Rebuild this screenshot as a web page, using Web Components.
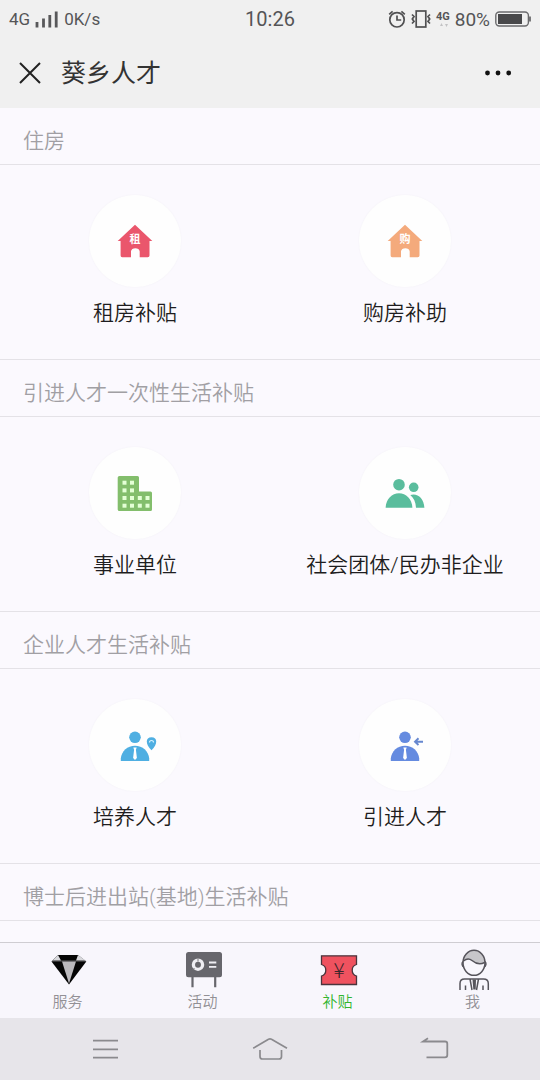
<!DOCTYPE html>
<html lang="zh-CN">
<head>
<meta charset="utf-8">
<meta name="viewport" content="width=device-width, initial-scale=1">
<title>葵乡人才</title>
<style>
body { margin: 0; font-family: Roboto, "Noto Sans CJK SC", sans-serif; }
</style>
</head>
<body>
<talent-app></talent-app>
<script>
const person = `<circle cx="20" cy="12.3" r="5.8"/><path d="M5.8 36V33.5C6.5 26 12.5 20.7 20 20.7S33.500 26 34.200 33.500V36Z"/>
  <path d="M18.300 22.500H21.700L20.900 24.800L21.900 33L20 35L18.100 33L19.100 24.800Z" fill="#fff"/>`;
const house = c => `<path d="M20 3.800L37.300 20H34.500V34.500Q34.500 36.200 32.800 36.200H24.700V30.500C24.700 26 16 26 16 30.500V36.200H7.200Q5.600 36.200 5.600 34.500V20H2.700Z"/>
  <text x="20" y="22" text-anchor="middle" font-size="11" font-weight="700" fill="#fff">${c}</text>`;
const windows = [[7.5,7.7],[15,7.7],[7.5,15.4],[15,15.4],[7.5,23],[15,23],[22.8,23],[30.500,23],[7.5,30.700],[15,30.700],[22.800,30.700],[30.500,30.700]]
  .map(([x, y]) => `<rect x="${x}" y="${y}" width="4" height="4" fill="#e4ffd6"/>`).join('');

/* Every drawing: [width, height, markup] */
const ICONS = {
  rent: [40, 40, `<g fill="#ea566c">${house('租')}</g>`],
  buy: [40, 40, `<g fill="#f4aa7c">${house('购')}</g>`],
  building: [40, 40, `<path d="M4.500 3H22.500Q24 3 24 4.500V18.500H35.500Q37 18.500 37 20V36.500Q37 38 35.500 38H4.500Q2.700 38 2.700 36.500V4.500Q2.700 3 4.500 3Z" fill="#83be6c"/>${windows}`],
  people: [40, 40, `<g fill="#5abd9d"><circle cx="14" cy="11.700" r="5.800"/><path d="M.6 34.700C1 26 7 20.300 14 20.300S27 26 27.400 34.700Z"/><circle cx="28.700" cy="14.300" r="4.800"/><path d="M25.300 22C32 19.500 39 25 39.400 34.700H31C30.700 29 28.800 25 25.300 22Z"/></g>`],
  train: [40, 40, `<g fill="#4fafe2">${person}<path d="M36.500 12.200C42.800 12.200 42.800 19 36.500 25.300C30.200 19 30.200 12.200 36.500 12.200Z"/><path d="M34.500 17.500a2 2 0 0 1 4 0" fill="none" stroke="#d8f4ff" stroke-width="1.200"/></g>`],
  recruit: [40, 40, `<g fill="#658be0">${person}</g><path d="M38 16.700H30.200M33.500 13.300L30 16.700L33.500 20" fill="none" stroke="#6687cf" stroke-width="1.900"/>`],
  diamond: [40, 40, `<path d="M10 5H30L38.300 11.500L21 34.500L3.500 11.500Z" fill="#050505"/><path d="M10 5L13 10.500H4.500ZM30 5L28 10.500H37.500Z" fill="#d8d8dc"/><path d="M14 11.500H28L21 33.500Z" fill="#bbb9bd"/><path d="M4 11H38" stroke="#a5a4a8" stroke-width=".6"/>`],
  board: [40, 40, `<rect x="3" y="2" width="36" height="25.300" rx="2.500" fill="#67666c"/><path d="M9.500 27V37.300M32.200 27V37.300" stroke="#67666c" stroke-width="2.200"/><circle cx="15" cy="14.700" r="4.600" fill="none" stroke="#efeef3" stroke-width="3.300"/><path d="M15 11.500V8.500M11.500 18L9.500 20" stroke="#77767b" stroke-width="1"/><path d="M26 12.500H33.300M26 16.800H33.300" stroke="#efeef3" stroke-width="1.800"/>`],
  coupon: [40, 40, `<path d="M3.500 5.800H38.500V14.500A6 6 0 0 0 38.500 26V34.500H3.500V26A6 6 0 0 0 3.500 14.500Z" fill="#ef525f" stroke="#4a343c" stroke-width="1.300"/><text x="21" y="28" text-anchor="middle" font-family="Noto Sans CJK SC" font-size="21" font-weight="300" fill="#3b252b">¥</text>`],
  me: [40, 40, `<path d="M10.500 9.500C11.500 3 16 .8 21 .8S30.800 4 31.600 12.500C27 15 22.500 13.500 19 10.500C16 8.500 13.500 8.500 10.500 11Z" fill="#c7c6ca"/><g fill="none" stroke="#56545b" stroke-width="1.500"><ellipse cx="21" cy="12.800" rx="11" ry="12.500"/><path d="M10.500 11C14 8 16.500 8.500 19 10.500C22.500 13.500 27 15 31.600 12.500M10 11.500C8.300 13 9 16.500 11 17M32 11.500C33.700 13 33 16.500 31 17M7 40V33.500Q7 29 11.500 29H30.500Q35.300 29 35.300 33.500V40M12.500 35.500V40M30 35.500V40M17 29L19 40M25.500 29L23.500 40"/></g><path d="M19.500 29.500H23L22.700 39.500H20.300Z" fill="#56545b"/>`],
  menu: [36, 28, `<path d="M6 5.700H31M6 14.300H31M6 22.700H31" fill="none" stroke="#8b8a8e" stroke-width="1.700"/>`],
  home: [36, 28, `<path d="M1.200 13.300L16.500 4.200Q18 3.500 19.500 4.200L35 13.300M8 15V21.500Q8 24 10.500 24H27Q29.500 24 29.500 21.500V15" fill="none" stroke="#8b8a8e" stroke-width="1.700"/>`],
  back: [36, 28, `<path d="M11 3.300L6 6.500H28Q30.300 6.500 30.300 8.800V20Q30.300 22.300 28 22.300H9.500" fill="none" stroke="#8b8a8e" stroke-width="1.800"/>`],
  close: [22, 22, `<path d="M1 1L21 21M21 1L1 21" stroke="#222" stroke-width="2"/>`],
  more: [28, 8, `<g fill="#111"><circle cx="3.500" cy="4" r="2.400"/><circle cx="14" cy="4" r="2.400"/><circle cx="24.700" cy="4" r="2.400"/></g>`],
  signal: [24, 18, `<path d="M2 12V17.500M8.500 8.500V17.500M14.800 5V17.500M21.200 1.500V17.500" stroke="#58585a" stroke-width="2.800"/>`],
  alarm: [18, 18, `<g fill="none" stroke="#505052" stroke-width="1.700"><circle cx="9" cy="9.800" r="7.200"/><path d="M9 5.500V10H13.200M1.200 4.300L4.600 1.300M16.800 4.300L13.400 1.300"/></g>`],
  vibrate: [20, 18, `<g fill="none" stroke="#505052" stroke-width="1.700"><rect x="5.200" y="1" width="9.600" height="16"/><path d="M1 4.500L3 6.500L1.300 9L3 11.500L1 13.500M19 4.500L17 6.500L18.700 9L17 11.500L19 13.500"/></g>`],
  battery: [36, 16, `<rect x=".8" y="1" width="32.600" height="14" rx="3.500" fill="none" stroke="#6a6a6c" stroke-width="1.400"/><rect x="3" y="3" width="24" height="10" fill="#48484a"/><path d="M35 5.500V10.500" stroke="#6a6a6c" stroke-width="1.800"/>`],
  data: [10, 4, `<path d="M1 3L2.500 0L4 3ZM6 1L7.500 4L9 1Z" fill="#c2c2c4"/>`]
};

const define = (name, markup, setup) => customElements.define(name, class extends HTMLElement {
  constructor() {
    super();
    this.attachShadow({ mode: 'open' }).innerHTML = markup;
  }
  connectedCallback() { if (setup) setup(this, this.shadowRoot); }
});

define('ui-icon', `<style>:host{display:block;flex:none}svg{display:block;overflow:visible}</style>`, (el, root) => {
  const [w, h, art] = ICONS[el.getAttribute('name')];
  root.innerHTML += `<svg width="${w}" height="${h}" viewBox="0 0 ${w} ${h}" aria-hidden="true">${art}</svg>`;
});

define('status-bar', `<style>
  :host{display:grid;grid-template-columns:1fr auto 1fr;align-items:center;height:38px;padding:0 9px;background:#f0f0f0;color:#555557;font-size:17px}
  div{display:flex;align-items:center;gap:5px}
  .end{justify-content:flex-end}
  .time{font-size:20px}
  .net{display:block;font-size:11px;line-height:12px;font-weight:700}
  .net ui-icon{margin-left:3px}
  .level{font-size:19px}
</style>
<div><span>4G</span><ui-icon name="signal"></ui-icon><span>0K/s</span></div>
<span class="time">10:26</span>
<div class="end"><ui-icon name="alarm"></ui-icon><ui-icon name="vibrate"></ui-icon>
<span class="net">4G<ui-icon name="data"></ui-icon></span><span class="level">80%</span><ui-icon name="battery"></ui-icon></div>`);

define('title-bar', `<style>
  :host{display:flex;align-items:center;gap:20px;height:70px;padding:0 28px 0 19px;background:#f0f0f0;color:#333}
  button{border:0;padding:0;background:none;display:block}
  h1{flex:1;margin:0;padding-top:2px;font-size:25px;line-height:36px;font-weight:400}
</style>
<button aria-label="关闭"><ui-icon name="close"></ui-icon></button>
<h1><slot></slot></h1>
<button aria-label="更多"><ui-icon name="more"></ui-icon></button>`);

define('subsidy-section', `<style>
  :host{display:block}
  h2{margin:0;box-sizing:border-box;height:57px;padding:17px 23px 0;border-bottom:1px solid #e4e2e7;font-size:21px;line-height:32px;font-weight:350;color:#a19fa4;white-space:nowrap}
  div{display:grid;grid-template-columns:1fr 1fr;box-sizing:border-box;min-height:195px;padding:30px 0;border-bottom:1px solid #e4e2e7}
</style><h2></h2><div><slot></slot></div>`, (el, root) => {
  root.querySelector('h2').textContent = el.getAttribute('heading');
});

define('subsidy-tile', `<style>
  :host{display:block}
  a{display:flex;flex-direction:column;align-items:center;gap:11px;color:#1e1d20;text-decoration:none;font-size:21px;line-height:30px;font-weight:350;white-space:nowrap}
  .disc{display:grid;place-items:center;width:92px;height:92px;border-radius:50%;background:#fefefe;box-shadow:0 0 2px #f3f1f6}
</style><a href="#"><span class="disc"></span><span><slot></slot></span></a>`, (el, root) => {
  const icon = document.createElement('ui-icon');
  icon.setAttribute('name', el.getAttribute('icon'));
  root.querySelector('.disc').replaceChildren(icon);
});

define('tab-link', `<style>
  :host{display:block}
  a{display:flex;flex-direction:column;align-items:center;gap:1px;padding:7px 0 5px;color:#929095;text-decoration:none;font-size:15px;line-height:22px;font-weight:350}
  :host([active]) a{color:#31b52d}
</style><a href="#"><slot name="icon"></slot><span><slot></slot></span></a>`);

define('tab-bar', `<style>
  :host{display:grid;grid-template-columns:repeat(4,1fr);flex:none;border-top:1px solid #cfcdd2;background:#f8f6fc}
</style><slot></slot>`);

define('system-nav', `<style>
  :host{display:grid;grid-template-columns:repeat(3,1fr);flex:none;height:62px;padding:0 23px;background:#e7e5ea}
  button{display:grid;place-items:center;border:0;padding:0;background:none}
</style>
<button aria-label="菜单"><ui-icon name="menu"></ui-icon></button>
<button aria-label="主页"><ui-icon name="home"></ui-icon></button>
<button aria-label="返回"><ui-icon name="back"></ui-icon></button>`);

define('talent-app', `<style>
  :host{display:flex;flex-direction:column;height:100vh;background:#fbf9fe}
  status-bar,title-bar{flex:none}
  main{flex:1;min-height:0;overflow-y:auto;scrollbar-width:none}
</style>
<status-bar></status-bar>
<title-bar>葵乡人才</title-bar>
<main>
  <subsidy-section heading="住房">
    <subsidy-tile icon="rent">租房补贴</subsidy-tile>
    <subsidy-tile icon="buy">购房补助</subsidy-tile>
  </subsidy-section>
  <subsidy-section heading="引进人才一次性生活补贴">
    <subsidy-tile icon="building">事业单位</subsidy-tile>
    <subsidy-tile icon="people">社会团体/民办非企业</subsidy-tile>
  </subsidy-section>
  <subsidy-section heading="企业人才生活补贴">
    <subsidy-tile icon="train">培养人才</subsidy-tile>
    <subsidy-tile icon="recruit">引进人才</subsidy-tile>
  </subsidy-section>
  <subsidy-section heading="博士后进出站(基地)生活补贴"></subsidy-section>
</main>
<tab-bar>
  <tab-link><ui-icon slot="icon" name="diamond"></ui-icon>服务</tab-link>
  <tab-link><ui-icon slot="icon" name="board"></ui-icon>活动</tab-link>
  <tab-link active><ui-icon slot="icon" name="coupon"></ui-icon>补贴</tab-link>
  <tab-link><ui-icon slot="icon" name="me"></ui-icon>我</tab-link>
</tab-bar>
<system-nav></system-nav>`);
</script>
</body>
</html>
